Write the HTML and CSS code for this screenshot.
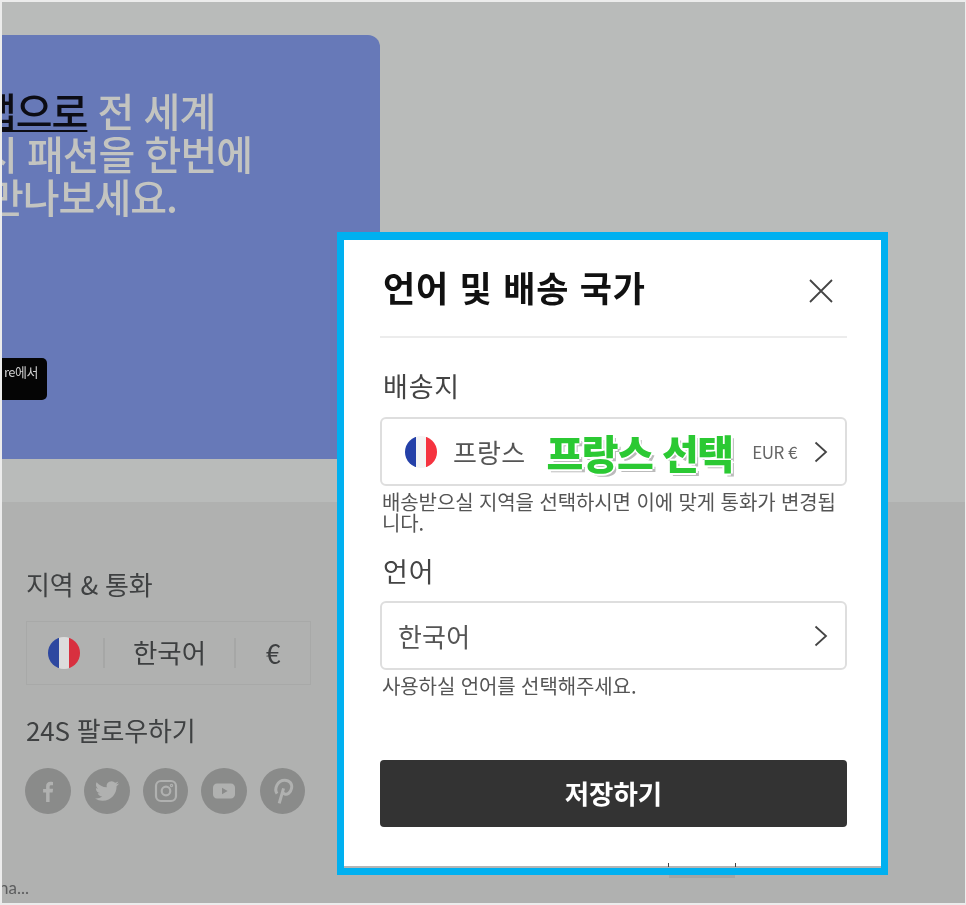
FILE: index.html
```html
<!DOCTYPE html>
<html lang="ko">
<head>
<meta charset="utf-8">
<title>언어 및 배송 국가</title>
<link rel="stylesheet" href="styles.css">
</head>
<body>
<main class="stage">
  <section class="top">
    <div class="hero">
      <h1 class="headline">
        <span class="line line-1"><u class="strong">앱으로</u> 전 세계</span>
        <span class="line line-2">시 패션을 한번에</span>
        <span class="line line-3">만나보세요.</span>
      </h1>
      <div class="store"><span>re에서</span></div>
    </div>
  </section>
  <footer class="foot">
    <h2 class="foot-title">지역 &amp; 통화</h2>
    <div class="region">
      <span class="region-flag">
        <svg class="flag flag-small" viewBox="0 0 32 32"><defs><clipPath id="c1"><circle cx="16" cy="16" r="16"/></clipPath></defs><g clip-path="url(#c1)"><rect width="11" height="32" fill="#2e48a0"/><rect x="11" width="10" height="32" fill="#dcdcdc"/><rect x="21" width="11" height="32" fill="#d8303f"/></g></svg>
      </span>
      <span class="region-lang">한국어</span>
      <span class="region-cur">€</span>
    </div>
    <h2 class="foot-title follow">24S 팔로우하기</h2>
    <div class="socials">
      <span class="social"><svg viewBox="0 0 24 24"><path d="M13.6 23v-9.600h3l.5-3.600h-3.500V7.900c0-1 .3-1.700 1.700-1.700H17V3c-.4 0-1.400-.2-2.600-.2-2.600 0-4.300 1.600-4.300 4.500V10H7.100v3.400h3V23z"/></svg></span>
      <span class="social"><svg viewBox="0 0 24 24"><path d="M23.953 4.57a10 10 0 01-2.825.775 4.958 4.958 0 002.163-2.723c-.951.555-2.005.959-3.127 1.184a4.92 4.92 0 00-8.384 4.482C7.69 8.095 4.067 6.13 1.64 3.162a4.822 4.822 0 00-.666 2.475c0 1.71.87 3.213 2.188 4.096a4.904 4.904 0 01-2.228-.616v.06a4.923 4.923 0 003.946 4.827 4.996 4.996 0 01-2.212.085 4.936 4.936 0 004.604 3.417 9.867 9.867 0 01-6.102 2.105c-.39 0-.779-.023-1.17-.067a13.995 13.995 0 007.557 2.209c9.053 0 13.998-7.496 13.998-13.985 0-.21 0-.42-.015-.63A9.935 9.935 0 0024 4.59z"/></svg></span>
      <span class="social social-narrow"><svg viewBox="0 0 24 24" class="line-icon"><rect x="2" y="2" width="20" height="20" rx="5"/><circle cx="12" cy="12" r="4.300"/><circle cx="17.500" cy="6.500" r=".6"/></svg></span>
      <span class="social"><svg viewBox="0 0 24 24"><path fill-rule="evenodd" d="M5 4.500h14c2.200 0 4 1.800 4 4v7c0 2.200-1.800 4-4 4H5c-2.200 0-4-1.800-4-4v-7c0-2.200 1.800-4 4-4zm5 4.200v6.600l5.600-3.300z"/></svg></span>
      <span class="social social-narrow"><svg viewBox="0 0 24 24" class="line-icon line-thick"><path d="M8.500 23.500L12.500 9.500M6.500 14.500C3.500 10 7 2 13.500 2c4.500 0 7.200 3.300 6.400 7.500-.8 4.200-4 6.300-6.600 5.100-1-.4-1.500-1.200-1.700-2"/></svg></span>
    </div>
    <p class="foot-note">na...</p>
  </footer>

  <div class="modal">
    <div class="modal-head">
      <h2 class="modal-title">언어 및 배송 국가</h2>
      <svg class="close" viewBox="0 0 24 24"><path d="M1 1l22 22M23 1L1 23"/></svg>
    </div>
    <div class="group group-ship">
      <label class="label">배송지</label>
      <div class="field">
        <svg class="flag" viewBox="0 0 32 32"><defs><clipPath id="c2"><circle cx="16" cy="16" r="16"/></clipPath></defs><g clip-path="url(#c2)"><rect width="11" height="32" fill="#2440a8"/><rect x="11" width="10" height="32" fill="#f4f4f4"/><rect x="21" width="11" height="32" fill="#f5333f"/></g></svg>
        <span class="field-text">프랑스</span>
        <span class="callout">프랑스 선택</span>
        <span class="currency">EUR €</span>
        <svg class="chev" viewBox="0 0 14 22"><path d="M1.500 1.500L12 11 1.500 20.500"/></svg>
      </div>
      <p class="help">배송받으실 지역을 선택하시면 이에 맞게 통화가 변경됩니다.</p>
    </div>
    <div class="group group-lang">
      <label class="label">언어</label>
      <div class="field field-lang">
        <span class="field-text">한국어</span>
        <svg class="chev" viewBox="0 0 14 22"><path d="M1.500 1.500L12 11 1.500 20.500"/></svg>
      </div>
      <p class="help">사용하실 언어를 선택해주세요.</p>
    </div>
    <button class="save">저장하기</button>
  </div>
  <div class="modal-tab"></div>
</main>
</body>
</html>
```
FILE: styles.css
```css
* { box-sizing: border-box; }
html, body { margin: 0; padding: 0; }
body { font-family: "Noto Sans CJK KR", "Noto Sans", sans-serif; background: #ececec; }
h1, h2, p { margin: 0; font-weight: 400; }

.stage {
  position: relative;
  width: 966px;
  height: 905px;
  border: 2px solid #ececec;
  border-right-width: 1px;
  display: flex;
  flex-direction: column;
  overflow: hidden;
  filter: blur(.35px);
}

.top {
  height: 500px;
  background: #b9bbba;
  padding-top: 33px;
  flex: none;
}
.hero {
  width: 378px;
  height: 424px;
  background: #6779b8;
  border-top-right-radius: 12px;
  overflow: hidden;
  padding-top: 54px;
}
.headline { font-size: 40px; line-height: 43px; font-weight: 500; color: #c3c4c0; letter-spacing: -1px; white-space: nowrap; }
.line { display: block; }
.line-1 { margin-left: -22px; }
.line-2 { margin-left: -21px; }
.line-3 { margin-left: -15px; }
.strong { color: #0c0c14; text-underline-offset: 3px; text-decoration-thickness: 2px; }
.store {
  width: 45px;
  height: 42px;
  margin-top: 140px;
  background: #050505;
  border-radius: 0 5px 5px 0;
  color: #cfcfcf;
  font-size: 13px;
  line-height: 28px;
  display: flex;
  justify-content: flex-end;
  padding-right: 9px;
  overflow: hidden;
  white-space: nowrap;
  letter-spacing: -.5px;
}
.store span { flex: none; }

.foot {
  flex: 1;
  background: #b0b1b0;
  padding: 64px 0 0 24px;
  color: #3d3f40;
  position: relative;
}
.foot-title { font-size: 26px; line-height: 36px; letter-spacing: -.2px; color: #3f4142; }
.follow { margin-top: 27px; }
.region {
  width: 285px;
  height: 64px;
  margin-top: 19px;
  border: 1px solid #a8a9a8;
  display: grid;
  grid-template-columns: 78px 131px 1fr;
  align-items: center;
  text-align: center;
  font-size: 26.500px;
}
.region-flag { display: flex; justify-content: center; padding-right: 2px; }
.region-flag, .region-lang { height: 30px; border-right: 2px solid #a6a7a6; }
.region-lang { line-height: 28px; }
.region-cur { line-height: 28px; }
.socials { display: flex; gap: 13px; margin-top: 20px; margin-left: -1px; }
.social {
  width: 46px;
  height: 46px;
  border-radius: 50%;
  background: #8a8b8a;
  display: flex;
  align-items: center;
  justify-content: center;
  flex: none;
}
.social-narrow { width: 45px; }
.social svg { width: 24px; height: 24px; fill: #b0b1b0; }
.social .line-icon { fill: none; stroke: #b0b1b0; stroke-width: 2.200; }
.social .line-thick { stroke-width: 2.800; height: 28px; width: 26px; }
.foot-note {
  position: absolute;
  left: -3px;
  bottom: 5px;
  font-family: "Lato", sans-serif;
  font-size: 17px;
  color: #5c5d5e;
}

.flag { width: 32px; height: 32px; flex: none; }
.flag-small { margin-top: -1px; }

.modal {
  position: absolute;
  left: 335px;
  top: 230px;
  width: 551px;
  height: 643px;
  background: #fff;
  border: 7px solid #00b0f0;
  border-top-width: 8px;
  padding: 0 34px 0 36px;
  box-shadow: inset 0 -2px 0 #b5b5b5;
  color: #222;
}
.modal-head {
  height: 98px;
  border-bottom: 2px solid #ececec;
  display: flex;
  align-items: center;
  justify-content: space-between;
  padding: 0 14px 0 3px;
}
.modal-title { font-size: 35px; line-height: 48px; font-weight: 700; color: #111; letter-spacing: .8px; margin-top: -2px; }
.close { width: 24px; height: 24px; fill: none; stroke: #444; stroke-width: 1.800; margin-top: 6px; }

.group-ship { margin-top: 29px; }
.group-lang { margin-top: 19px; }
.label { display: block; padding-left: 3px; font-size: 27px; line-height: 38px; color: #444; letter-spacing: .8px; }
.field {
  height: 69px;
  margin-top: 12px;
  border: 2px solid #dedede;
  border-radius: 6px;
  display: flex;
  align-items: center;
  padding: 0 17px 0 23px;
  position: relative;
}
.field-text { font-size: 26px; color: #555; margin-left: 16px; letter-spacing: .2px; }
.field-lang { justify-content: space-between; padding-left: 0; margin-top: 11px; }
.callout {
  font-size: 40px;
  font-weight: 900;
  color: #2bc933;
  letter-spacing: -1.500px;
  margin-left: 21px;
  line-height: 1;
  flex: 1;
  white-space: nowrap;
  text-shadow: 2px 0 #fff, -2px 0 #fff, 0 2px #fff, 0 -2px #fff, 3px 3px #bbb, -2px 2px #fff, 2px -2px #fff, -2px -2px #fff;
}
.currency { font-size: 17px; color: #666; margin-right: 17px; letter-spacing: -.5px; }
.chev { width: 14px; height: 22px; fill: none; stroke: #444; stroke-width: 1.800; flex: none; }
.help { font-size: 20px; line-height: 21px; color: #555; padding: 5px 0 0 2px; letter-spacing: -.1px; }
.save {
  display: block;
  width: 100%;
  height: 67px;
  margin-top: 64px;
  background: #333;
  color: #fff;
  border: 0;
  border-radius: 4px;
  font: 700 26.500px/1 "Noto Sans CJK KR", sans-serif;
}
.modal-tab {
  position: absolute;
  left: 666px;
  top: 861px;
  width: 68px;
  height: 4px;
  border-left: 1px solid #444;
  border-right: 1px solid #444;
}
.modal-tab::after {
  content: "";
  position: absolute;
  left: 0;
  right: 0;
  top: 12px;
  height: 3px;
  background: #a3a4a3;
}
```
